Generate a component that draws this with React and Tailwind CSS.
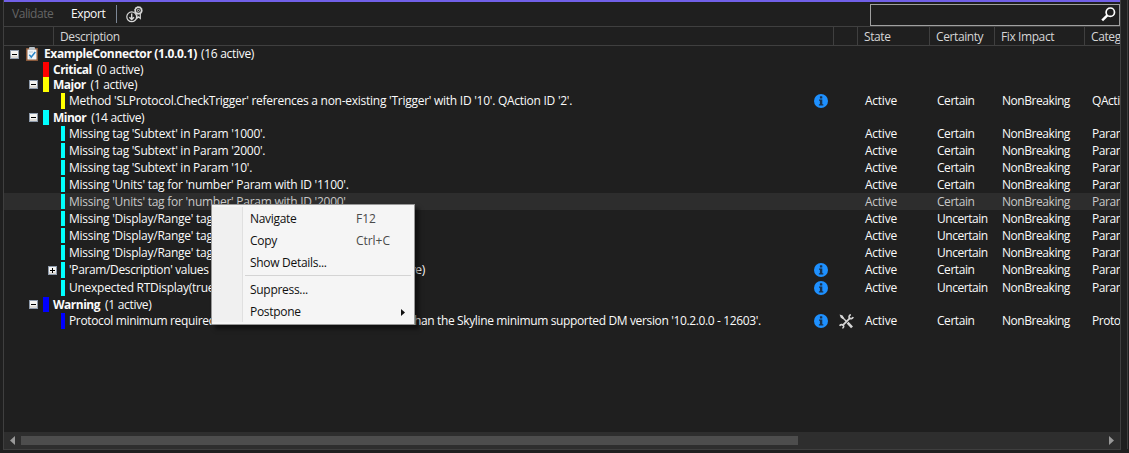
import React from "react";

const C = { red: "bg-[#ff0000]", yellow: "bg-[#ffff00]", cyan: "bg-[#00ffff]", blue: "bg-[#0000ff]" };

const rows = [
  { kind: "root", label: "ExampleConnector (1.0.0.1)", count: "(16 active)" },
  { kind: "group", color: C.red, label: "Critical", count: "(0 active)" },
  { kind: "group", color: C.yellow, label: "Major", count: "(1 active)", box: "-" },
  { kind: "leaf", tall: true, color: C.yellow, text: "Method 'SLProtocol.CheckTrigger' references a non-existing 'Trigger' with ID '10'. QAction ID '2'.", info: true, certainty: "Certain", category: "QAction" },
  { kind: "group", color: C.cyan, label: "Minor", count: "(14 active)", box: "-" },
  { kind: "leaf", color: C.cyan, text: "Missing tag 'Subtext' in Param '1000'.", certainty: "Certain" },
  { kind: "leaf", color: C.cyan, text: "Missing tag 'Subtext' in Param '2000'.", certainty: "Certain" },
  { kind: "leaf", color: C.cyan, text: "Missing tag 'Subtext' in Param '10'.", certainty: "Certain" },
  { kind: "leaf", color: C.cyan, text: "Missing 'Units' tag for 'number' Param with ID '1100'.", certainty: "Certain" },
  { kind: "leaf", color: C.cyan, text: "Missing 'Units' tag for 'number' Param with ID '2000'.", certainty: "Certain", selected: true },
  { kind: "leaf", color: C.cyan, text: "Missing 'Display/Range' tag", certainty: "Uncertain" },
  { kind: "leaf", color: C.cyan, text: "Missing 'Display/Range' tag", certainty: "Uncertain" },
  { kind: "leaf", color: C.cyan, text: "Missing 'Display/Range' tag", certainty: "Uncertain" },
  { kind: "leaf", tall: true, color: C.cyan, text: "'Param/Description' values", head: "w-[310px]", rest: "(2 active)", box: "+", info: true, certainty: "Certain" },
  { kind: "leaf", tall: true, color: C.cyan, text: "Unexpected RTDisplay(true)", info: true, certainty: "Uncertain" },
  { kind: "group", color: C.blue, label: "Warning", count: "(1 active)", box: "-" },
  { kind: "leaf", tall: true, color: C.blue, text: "Protocol minimum required", head: "w-[341px]", rest: "than the Skyline minimum supported DM version '10.2.0.0 - 12603'.", info: true, tools: true, certainty: "Certain", category: "Protocol" },
];

function Expander({ sign }) {
  return (
    <svg className="block h-[9px] w-[9px] shrink-0" viewBox="0 0 9 9" shapeRendering="crispEdges">
      <rect width="9" height="9" rx="1" fill="#8d9aab" />
      <rect x="1" y="1" width="7" height="7" fill="#f4f4f2" />
      <rect x="1" y="6" width="7" height="2" fill="#dcdad6" />
      <rect x="2" y="4" width="5" height="1" fill="#000" />
      {sign === "+" && <rect x="4" y="2" width="1" height="5" fill="#000" />}
    </svg>
  );
}

function Clipboard() {
  return (
    <svg className="block h-[14px] w-[12px] shrink-0" viewBox="0 0 12 14">
      <rect y="1" width="12" height="13" rx=".5" fill="#8a5a3c" />
      <rect x="1.5" y="2.5" width="9" height="10" fill="#f2f6fa" />
      <rect x="3" y="0" width="6" height="3" rx="1" fill="#b9c2c8" />
      <path d="M3 5h4M3 11h3" stroke="#b8cbdc" strokeWidth="1" />
      <path d="M3.3 7.8l2 2.2 4-5" fill="none" stroke="#2a85c8" strokeWidth="1.5" />
    </svg>
  );
}

function Info() {
  return (
    <svg className="block h-[14px] w-[14px]" viewBox="0 0 14 14">
      <circle cx="7" cy="7" r="7" fill="#1e90ff" />
      <rect x="5.9" y="2.3" width="2.4" height="2.1" rx=".5" fill="#1b3048" />
      <path d="M5 5.5h3.3v4.8h1v1.2H4.9v-1.2h1V6.7H5z" fill="#1b3048" />
    </svg>
  );
}

function Tools() {
  return (
    <svg className="block h-[15px] w-[15px]" viewBox="0 0 15 15" fill="none" stroke="#d6d6d6">
      <path d="M3 3l5 5" strokeWidth="1.4" />
      <path d="M.6 .6l3 1L5 3.9 3.9 5 1.8 3.8z" fill="#d6d6d6" stroke="none" />
      <path d="M8.6 8.6l4.4 4.8" strokeWidth="2.6" />
      <path d="M3.4 11.7l8-8" strokeWidth="1.9" />
      <path d="M11.9 .8c-1.7.4-2.3 2-1.6 3.1 1 1.3 3.2 1 3.9-.9" strokeWidth="1.6" />
      <path d="M3.4 14.2c1.4-.7 1.6-2 .8-3-1-1-2.9-.8-3.5.7" strokeWidth="1.6" />
    </svg>
  );
}

function ExportIcon() {
  return (
    <svg className="block h-[17px] w-[18px]" viewBox="0 0 18 17" fill="none" stroke="#d8d8d8">
      <circle cx="5.7" cy="10.8" r="4.9" strokeWidth="1.2" />
      <path d="M5.7 7.5v6M3.4 11.2l2.3 2.4L8 11.2" strokeWidth="1.4" />
      <circle cx="12.4" cy="4.4" r="3.2" strokeWidth="1.5" />
      <circle cx="12.4" cy="4.4" r="3.9" strokeWidth=".8" strokeDasharray="1.2 1.2" />
      <circle cx="12.4" cy="4.4" r="1.1" strokeWidth=".9" />
      <path d="M10.9 8.2V12.4l1.6-1.5 1.8 1.5V7.8" strokeWidth="1.2" />
    </svg>
  );
}

function Search() {
  return (
    <svg className="block h-[15px] w-[15px]" viewBox="0 0 15 15" fill="none" stroke="#fff">
      <circle cx="9.3" cy="5.2" r="4.2" strokeWidth="1.7" />
      <path d="M6.3 8.4L1.2 13.4" strokeWidth="2.5" />
    </svg>
  );
}

function Row({ row }) {
  if (row.kind === "root")
    return (
      <div className="flex h-4 items-center pl-1.5">
        <Expander sign="-" />
        <span className="ml-[7px]"><Clipboard /></span>
        <span className="ml-1.5 w-[157px] pb-px font-bold tracking-[-0.36px]">{row.label}</span>
        <span className="pb-px">{row.count}</span>
      </div>
    );
  if (row.kind === "group")
    return (
      <div className="flex h-[15px] items-center pl-[25px]">
        <span className="w-[14px]">{row.box && <Expander sign={row.box} />}</span>
        <span className={`h-[15px] w-1.5 ${row.color}`} />
        <span className="ml-1 font-bold tracking-[-0.5px]">{row.label}</span>
        <span className="ml-[5px]">{row.count}</span>
      </div>
    );
  const lift = row.tall ? "pb-[2px]" : "";
  return (
    <div className={`flex items-center tracking-[-0.45px] ${row.tall ? "h-[18px]" : "h-[17px]"} ${row.selected ? "bg-[#2d2d2d] text-[#c8c8c8]" : ""}`}>
      <div className="flex w-[810px] shrink-0 items-center pl-11">
        <span className="w-[13px] shrink-0">{row.box && <Expander sign={row.box} />}</span>
        <span className={`w-1 shrink-0 ${row.tall ? "h-4" : "h-[15px]"} ${row.color}`} />
        <span className={`ml-1 shrink-0 ${lift} ${row.head ? `tracking-[-0.36px] ${row.head}` : "tracking-[-0.26px]"}`}>{row.text}</span>
        {row.rest && <span className={`tracking-[-0.36px] ${lift}`}>{row.rest}</span>}
      </div>
      <span className="w-[25px] shrink-0">{row.info && <Info />}</span>
      <span className="w-[26px] shrink-0">{row.tools && <Tools />}</span>
      <span className={`w-[72px] shrink-0 tracking-[-0.25px] ${lift}`}>Active</span>
      <span className={`w-[65px] shrink-0 ${lift}`}>{row.certainty}</span>
      <span className={`w-[90px] shrink-0 ${lift}`}>NonBreaking</span>
      <span className={`shrink-0 ${lift}`}>{row.category || "Param"}</span>
    </div>
  );
}

const head = "flex h-full shrink-0 items-center border-l border-[#3f3f3f] pl-1.5";

function MenuItem({ label, shortcut, arrow }) {
  return (
    <div className="flex h-[22px] items-center pl-[38px]">
      <span className="w-[106px] pb-[2px]">{label}</span>
      <span className="w-[45px] pb-[2px] tracking-[-0.05px] text-[#4a4a4a]">{shortcut}</span>
      {arrow && (
        <svg className="h-[7px] w-1" viewBox="0 0 4 7"><path d="M0 0l4 3.5L0 7z" fill="#111" /></svg>
      )}
    </div>
  );
}

export default function App() {
  return (
    <div className="relative flex h-[453px] w-[1129px] overflow-hidden bg-[#1f1f1f] pl-[3px] font-['Open_Sans',sans-serif] text-[12px] leading-[15px] tracking-[-0.3px] whitespace-nowrap text-[#fafafa]">
      <div className="flex h-[450px] w-[1118px] flex-col overflow-hidden border-r border-b border-l border-[#3f3f3f]">
        <div className="h-0.5 shrink-0 bg-[#7160e8]" />
        <div className="flex h-6 shrink-0 items-center pl-2">
          <span className="w-[59px] pb-px tracking-[-0.45px] text-[#656565]">Validate</span>
          <span className="w-[45px] pb-px tracking-[-0.4px]">Export</span>
          <span className="h-[18px] w-px bg-[#7d8796]" />
          <span className="ml-[9px]"><ExportIcon /></span>
          <div className="mt-0.5 ml-auto flex h-[22px] w-[250px] items-center justify-end border border-[#a0a0a0] pr-[3px] pb-0.5">
            <Search />
          </div>
        </div>
        <div className="flex h-5 shrink-0 items-center border-y border-[#3f3f3f] tracking-[-0.4px] text-[#d6d6d6]">
          <div className="w-[49px] shrink-0" />
          <div className={`${head} w-[780px]`}>Description</div>
          <div className={`${head} w-6`} />
          <div className={`${head} w-[72px]`}>State</div>
          <div className={`${head} w-[65px]`}>Certainty</div>
          <div className={`${head} w-[90px]`}>Fix Impact</div>
          <div className={`${head} w-[90px]`}>Category</div>
        </div>
        <div className="min-h-0 flex-1">
          {rows.map((row, i) => <Row key={i} row={row} />)}
        </div>
        <div className="flex h-[17px] shrink-0 items-center justify-between bg-[#2e2e2e] pr-1.5 pl-1.5">
          <svg className="h-[9px] w-[5px]" viewBox="0 0 5 9"><path d="M5 0v9L0 4.5z" fill="#999" /></svg>
          <div className="mr-auto ml-1.5 h-[9px] w-[777px] bg-[#4d4d4d]" />
          <svg className="h-[9px] w-[5px]" viewBox="0 0 5 9"><path d="M0 0v9l5-4.5z" fill="#999" /></svg>
        </div>
      </div>
      <div className="ml-1.5 h-[449px] w-px bg-[#3f3f3f]" />

      <div className="absolute top-[204px] left-[211px] h-[121px] w-[204px] border border-[#979797] bg-[#f5f5f5] text-[#101010] shadow-[4px_4px_4px_rgba(0,0,0,0.5)]">
        <div className="flex h-full">
          <div className="my-0.5 w-[31px] shrink-0 border-r border-[#e0e0e0] bg-[#f0f0f0]" />
          <div className="-ml-[31px] flex-1 pt-[3px]">
            <MenuItem label="Navigate" shortcut="F12" />
            <MenuItem label="Copy" shortcut="Ctrl+C" />
            <MenuItem label="Show Details..." />
            <div className="mt-[1px] mr-[3px] mb-[3px] ml-[33px] h-px bg-[#d4d4d4]" />
            <MenuItem label="Suppress..." />
            <MenuItem label="Postpone" arrow />
          </div>
        </div>
      </div>
    </div>
  );
}
